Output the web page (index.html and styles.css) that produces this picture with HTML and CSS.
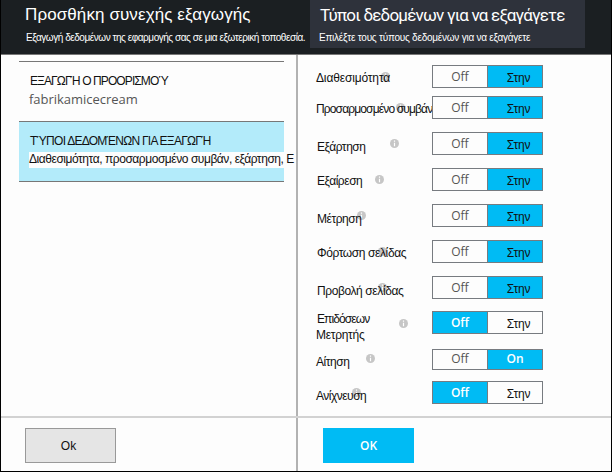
FILE: index.html
```
<!DOCTYPE html>
<html lang="el">
<head>
<meta charset="utf-8">
<title>Προσθήκη συνεχής εξαγωγής</title>
<link rel="stylesheet" href="styles.css">
</head>
<body>
<svg width="0" height="0" class="defs"><defs><symbol id="info" viewBox="0 0 9 9"><circle cx="4.5" cy="4.5" r="4.5" fill="#c6c6c6"/><path d="M4.5 1.6v1.1M4.5 3.7v3.5" stroke="#fff" stroke-width="1.2"/></symbol></defs></svg>
<div class="frame">
  <header class="header">
    <div class="head"><h1 class="title">Προσθήκη συνεχής εξαγωγής</h1><p class="sub">Εξαγωγή δεδομένων της εφαρμογής σας σε μια εξωτερική τοποθεσία.</p></div>
    <div class="head active"><h2 class="title">Τύποι δεδομένων για να εξαγάγετε</h2><p class="sub">Επιλέξτε τους τύπους δεδομένων για να εξαγάγετε</p></div>
  </header>
  <main class="body">
    <section class="left">
      <div class="item"><div class="caption">ΕΞΑΓΩΓΉ Ο ΠΡΟΟΡΙΣΜΟΎ</div><div class="value">fabrikamicecream</div></div>
      <div class="item selected"><div class="caption">ΤΎΠΟΙ ΔΕΔΟΜΈΝΩΝ ΓΙΑ ΕΞΑΓΩΓΉ</div><div class="types">Διαθεσιμότητα, προσαρμοσμένο συμβάν, εξάρτηση, Ε</div></div>
    </section>
    <section class="right">
      <div class="row availability"><div class="label">Διαθεσιμότητα<svg class="info"><use href="#info"/></svg></div><div class="toggle"><span>Off</span><span class="on gr">Στην</span></div></div>
      <div class="row custom"><div class="label">Προσαρμοσμένο συμβάν<svg class="info"><use href="#info"/></svg></div><div class="toggle"><span>Off</span><span class="on gr">Στην</span></div></div>
      <div class="row dependency"><div class="label">Εξάρτηση<svg class="info"><use href="#info"/></svg></div><div class="toggle"><span>Off</span><span class="on gr">Στην</span></div></div>
      <div class="row exception"><div class="label">Εξαίρεση<svg class="info"><use href="#info"/></svg></div><div class="toggle"><span>Off</span><span class="on gr">Στην</span></div></div>
      <div class="row metric"><div class="label">Μέτρηση<svg class="info"><use href="#info"/></svg></div><div class="toggle"><span>Off</span><span class="on gr">Στην</span></div></div>
      <div class="row load"><div class="label">Φόρτωση σελίδας<svg class="info"><use href="#info"/></svg></div><div class="toggle"><span>Off</span><span class="on gr">Στην</span></div></div>
      <div class="row view"><div class="label">Προβολή σελίδας<svg class="info"><use href="#info"/></svg></div><div class="toggle"><span>Off</span><span class="on gr">Στην</span></div></div>
      <div class="row counter"><div class="label"><span class="first">Επιδόσεων</span><br>Μετρητής<svg class="info"><use href="#info"/></svg></div><div class="toggle"><span class="on">Off</span><span class="gr">Στην</span></div></div>
      <div class="row request"><div class="label">Αίτηση<svg class="info"><use href="#info"/></svg></div><div class="toggle"><span>Off</span><span class="on">On</span></div></div>
      <div class="row trace"><div class="label">Ανίχνευση<svg class="info"><use href="#info"/></svg></div><div class="toggle"><span class="on">Off</span><span class="gr">Στην</span></div></div>
    </section>
  </main>
  <footer class="footer"><div class="cell"><button class="btn">Ok</button></div><div class="cell"><button class="btn primary">OK</button></div></footer>
</div>
</body>
</html>
```
FILE: styles.css
```
* { box-sizing: border-box; margin: 0; padding: 0; }
body { font: 12px/16px "Liberation Sans", sans-serif; background: #fff; color: #111; overflow: hidden; }
.defs { position: absolute; }
.frame { position: relative; z-index: 0; width: 612px; height: 472px; border: 1px solid #000; border-top: 0; background: #fdfdfd; }
.header { display: flex; height: 55px; background: #1b1f22; color: #fff; border-bottom: 1px solid #777; }
.head { width: 309px; padding: 4px 0 0 24px; white-space: nowrap; }
.title { font-weight: 400; font-size: 17px; line-height: 22px; letter-spacing: .1px; }
.sub { font-size: 10px; line-height: 14px; margin: 4.5px 0 0 1px; letter-spacing: -.46px; }
.active { width: 275px; height: 48px; background: #2e323b; padding: 4px 0 0 10px; }
.active .title { font-family: Roboto, sans-serif; letter-spacing: -.8px; }
.active .sub { margin-left: -1px; letter-spacing: -.24px; }
.body { display: flex; height: 361px; }
.left { flex: none; width: 297px; border-right: 2px solid #b2b2b2; padding-top: 6px; }
.item { width: 265px; height: 60px; margin-left: 18px; border-top: 1px solid #777; padding: 11px 0 0 10px; white-space: nowrap; }
.caption { padding-left: 1px; letter-spacing: -.9px; }
.value { font: 13px/18px "Open Sans", sans-serif; letter-spacing: -.02px; color: #555; margin-top: 1px; }
.selected { height: 61px; background: #b3ebfa; border-bottom: 1px solid #777; }
.selected .caption { letter-spacing: -.74px; }
.types { height: 16px; margin-top: 3px; line-height: 14px; background: #fdfdfd; letter-spacing: -.45px; }
.right { width: 313px; padding: 10px 0 0 18px; display: grid; grid-template-rows: 31px 36px 36px 36px 36px 36px 35px 38px 32px 24px; }
.row { display: grid; grid-template-columns: 116px 111px; align-items: start; }
.label { position: relative; white-space: nowrap; padding-top: 5px; letter-spacing: -.45px; }
.info { position: absolute; width: 9px; height: 9px; top: 7px; z-index: -1; }
.toggle { position: relative; display: grid; grid-template-columns: 54px 55px; height: 23px; border: 1px solid #777b80; background: #fdfdfd; }
.toggle span { font: 12px/21px "Open Sans", sans-serif; text-align: center; color: #555; }
.toggle span + span { border-left: 1px solid #777b80; }
.toggle .on { background: #00bbf4; color: #fff; font-weight: 600; }
.toggle .gr { font: 12px/25px "Liberation Sans", sans-serif; letter-spacing: -.2px; color: #111; height: 21px; padding-left: 7px; }
.availability .label { letter-spacing: -.15px; }
.availability .info { left: 65px; }
.custom .label { letter-spacing: -.85px; }
.custom .info { left: 80px; }
.dependency .label { padding: 7px 0 0 1px; }
.dependency .info { left: 74px; }
.exception .label { padding-left: 1px; }
.exception .info { left: 59px; }
.metric .label { padding: 7px 0 0 1px; }
.metric .info { left: 41px; }
.load .label { padding-left: 1px; letter-spacing: -.4px; }
.load .info { left: 62px; }
.view .label { padding: 7px 0 0 1px; letter-spacing: -.4px; }
.view .info { left: 62px; }
.counter .label { padding-top: 0; letter-spacing: -.3px; }
.counter .first { padding-left: 1px; letter-spacing: -.9px; }
.counter .info { left: 83px; top: 8px; }
.request .toggle { height: 21px; }
.request .toggle span { line-height: 18px; }
.request .info { left: 50px; top: 5px; }
.trace .label { padding-top: 7px; letter-spacing: -.5px; }
.trace .info { left: 36px; }
.footer { display: flex; height: 55px; border-top: 2px solid #d2d2d2; }
.cell { width: 297px; padding: 10px 0 0 24px; border-right: 2px solid #b2b2b2; }
.cell + .cell { border: 0; padding-left: 25px; }
.btn { display: block; width: 91px; height: 35px; border: 1px solid #999; background: #e5e5e5; font: 12px/31px "Liberation Sans", sans-serif; padding: 1px 4px 0 0; color: #111; }
.primary { border: 0; background: #00bbf4; color: #fff; font: 600 12px/33px "Open Sans", sans-serif; padding: 0; }
```
